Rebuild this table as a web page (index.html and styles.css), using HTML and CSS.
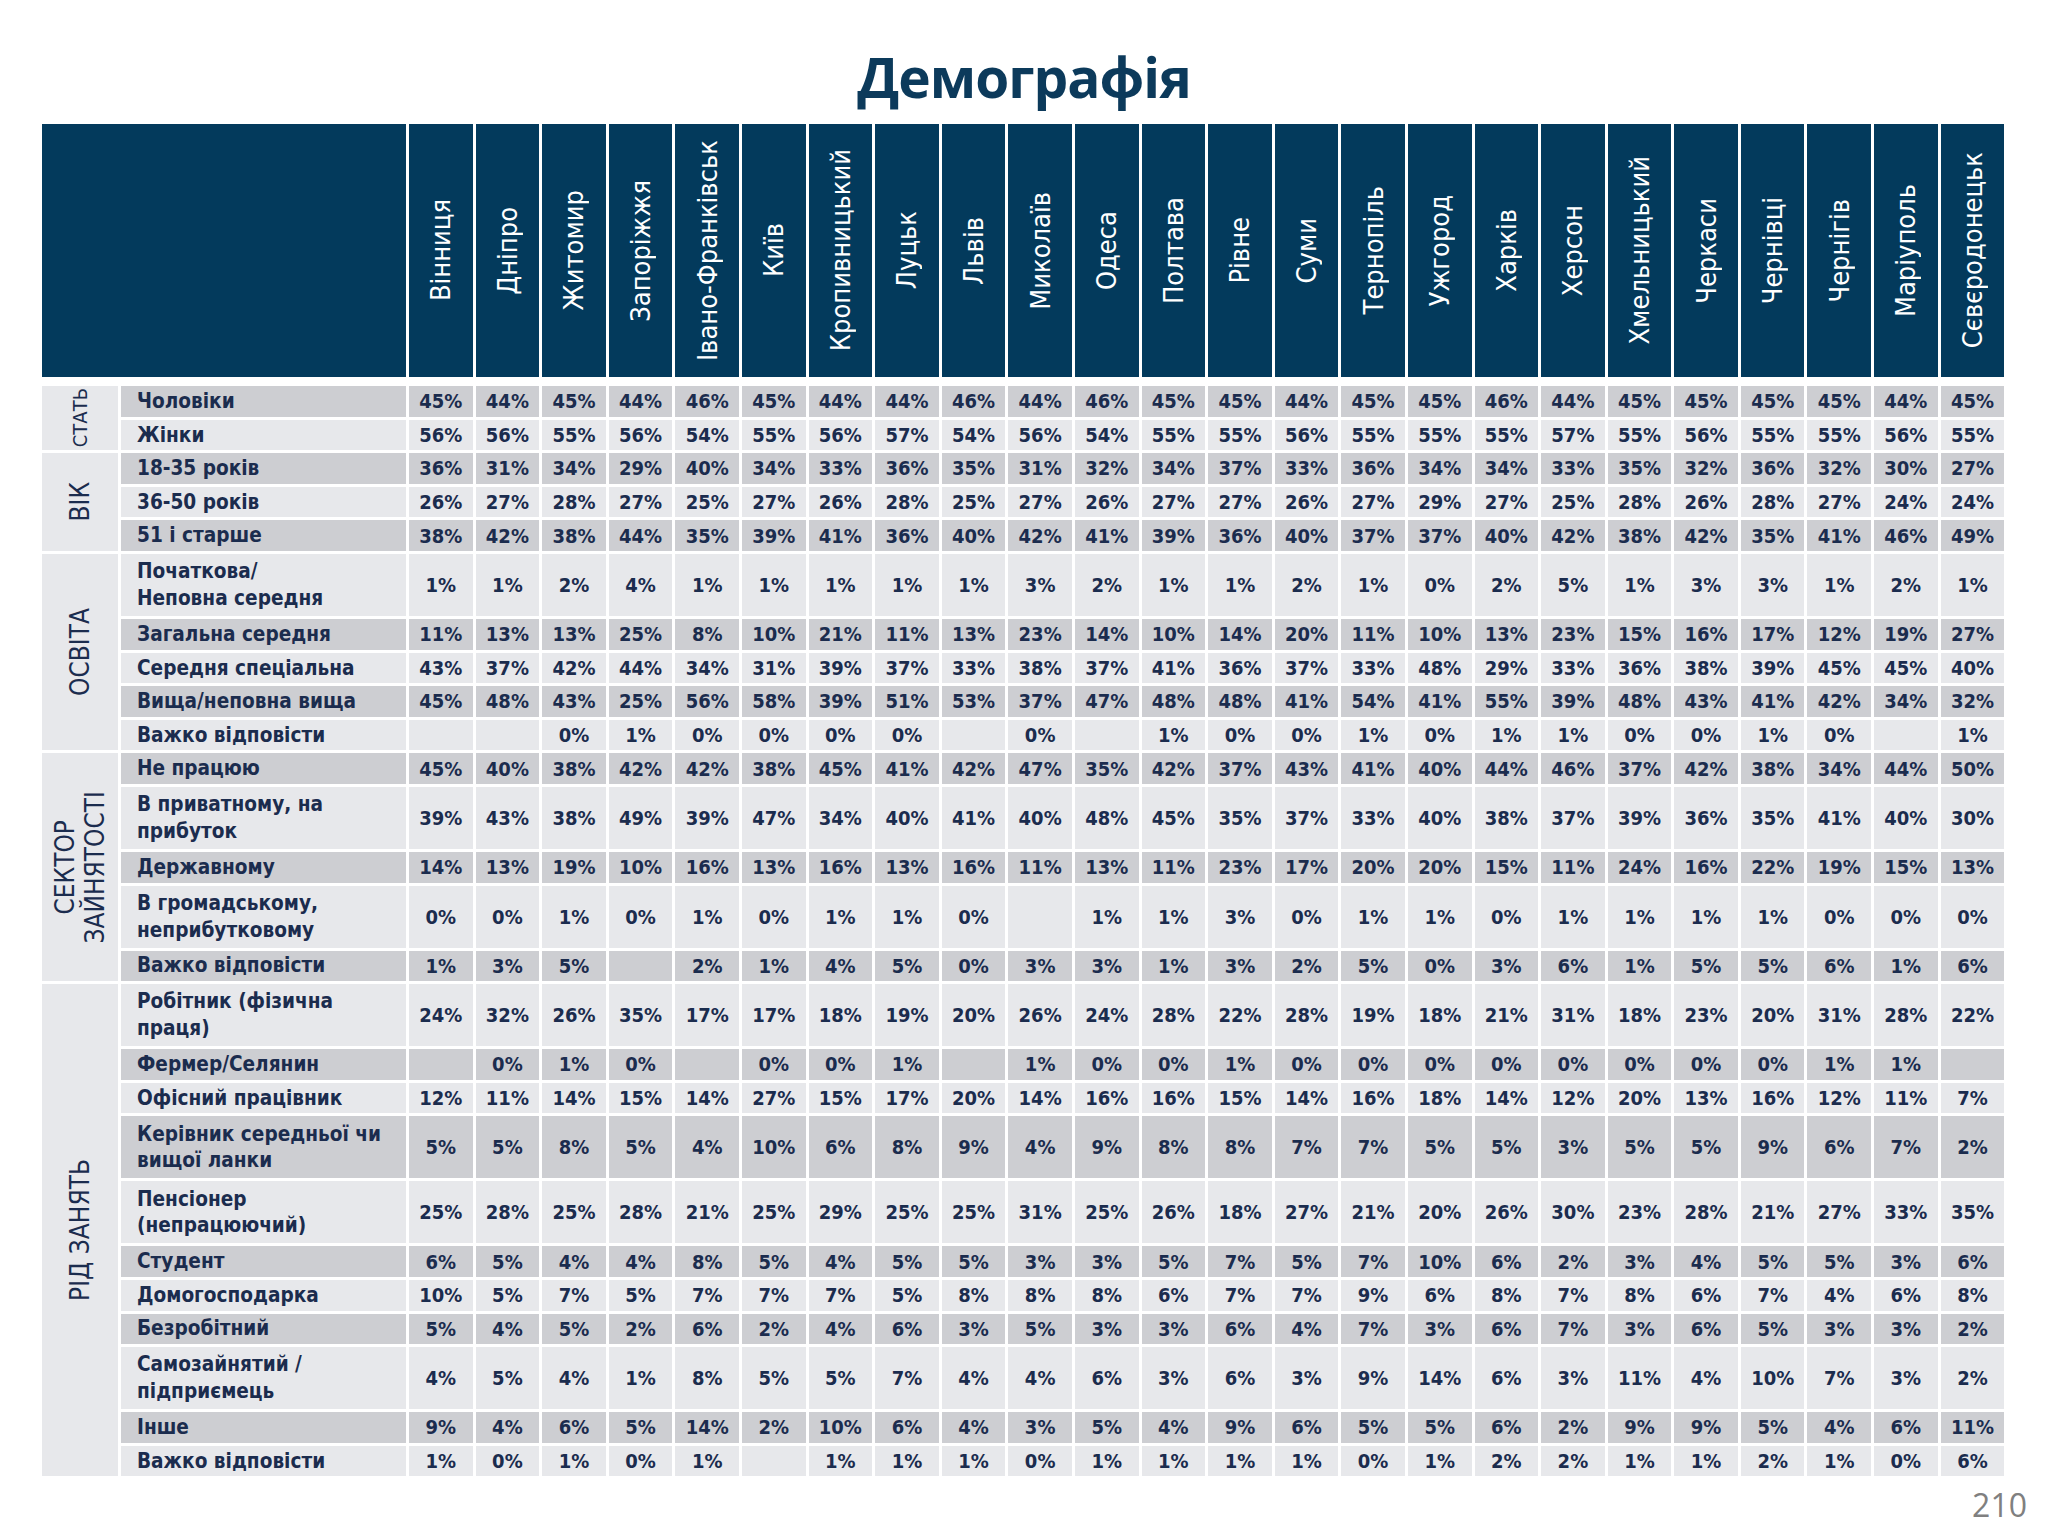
FILE: index.html
```html
<!DOCTYPE html>
<html lang="uk">
<head>
<meta charset="utf-8">
<title>Демографія</title>
<link rel="stylesheet" href="styles.css">
</head>
<body>
<div class="page">
  <h1 class="title">Демографія</h1>
  <div class="grid head">
    <div class="blank"></div>
    <div class="city"><span>Вінниця</span></div>
    <div class="city"><span>Дніпро</span></div>
    <div class="city"><span>Житомир</span></div>
    <div class="city"><span>Запоріжжя</span></div>
    <div class="city"><span>Івано-Франківськ</span></div>
    <div class="city"><span>Київ</span></div>
    <div class="city"><span>Кропивницький</span></div>
    <div class="city"><span>Луцьк</span></div>
    <div class="city"><span>Львів</span></div>
    <div class="city"><span>Миколаїв</span></div>
    <div class="city"><span>Одеса</span></div>
    <div class="city"><span>Полтава</span></div>
    <div class="city"><span>Рівне</span></div>
    <div class="city"><span>Суми</span></div>
    <div class="city"><span>Тернопіль</span></div>
    <div class="city"><span>Ужгород</span></div>
    <div class="city"><span>Харків</span></div>
    <div class="city"><span>Херсон</span></div>
    <div class="city"><span>Хмельницький</span></div>
    <div class="city"><span>Черкаси</span></div>
    <div class="city"><span>Чернівці</span></div>
    <div class="city"><span>Чернігів</span></div>
    <div class="city"><span>Маріуполь</span></div>
    <div class="city"><span>Сєвєродонецьк</span></div>
  </div>
  <div class="grid body">
    <div class="cat span2"><span class="small">СТАТЬ</span></div>
    <div class="r d"><div class="lab">Чоловіки</div><div>45%</div><div>44%</div><div>45%</div><div>44%</div><div>46%</div><div>45%</div><div>44%</div><div>44%</div><div>46%</div><div>44%</div><div>46%</div><div>45%</div><div>45%</div><div>44%</div><div>45%</div><div>45%</div><div>46%</div><div>44%</div><div>45%</div><div>45%</div><div>45%</div><div>45%</div><div>44%</div><div>45%</div></div>
    <div class="r"><div class="lab">Жінки</div><div>56%</div><div>56%</div><div>55%</div><div>56%</div><div>54%</div><div>55%</div><div>56%</div><div>57%</div><div>54%</div><div>56%</div><div>54%</div><div>55%</div><div>55%</div><div>56%</div><div>55%</div><div>55%</div><div>55%</div><div>57%</div><div>55%</div><div>56%</div><div>55%</div><div>55%</div><div>56%</div><div>55%</div></div>

    <div class="cat span3"><span>ВІК</span></div>
    <div class="r d"><div class="lab">18-35 років</div><div>36%</div><div>31%</div><div>34%</div><div>29%</div><div>40%</div><div>34%</div><div>33%</div><div>36%</div><div>35%</div><div>31%</div><div>32%</div><div>34%</div><div>37%</div><div>33%</div><div>36%</div><div>34%</div><div>34%</div><div>33%</div><div>35%</div><div>32%</div><div>36%</div><div>32%</div><div>30%</div><div>27%</div></div>
    <div class="r"><div class="lab">36-50 років</div><div>26%</div><div>27%</div><div>28%</div><div>27%</div><div>25%</div><div>27%</div><div>26%</div><div>28%</div><div>25%</div><div>27%</div><div>26%</div><div>27%</div><div>27%</div><div>26%</div><div>27%</div><div>29%</div><div>27%</div><div>25%</div><div>28%</div><div>26%</div><div>28%</div><div>27%</div><div>24%</div><div>24%</div></div>
    <div class="r d"><div class="lab">51 і старше</div><div>38%</div><div>42%</div><div>38%</div><div>44%</div><div>35%</div><div>39%</div><div>41%</div><div>36%</div><div>40%</div><div>42%</div><div>41%</div><div>39%</div><div>36%</div><div>40%</div><div>37%</div><div>37%</div><div>40%</div><div>42%</div><div>38%</div><div>42%</div><div>35%</div><div>41%</div><div>46%</div><div>49%</div></div>

    <div class="cat span5"><span>ОСВІТА</span></div>
    <div class="r"><div class="lab">Початкова/<br>Неповна середня</div><div>1%</div><div>1%</div><div>2%</div><div>4%</div><div>1%</div><div>1%</div><div>1%</div><div>1%</div><div>1%</div><div>3%</div><div>2%</div><div>1%</div><div>1%</div><div>2%</div><div>1%</div><div>0%</div><div>2%</div><div>5%</div><div>1%</div><div>3%</div><div>3%</div><div>1%</div><div>2%</div><div>1%</div></div>
    <div class="r d"><div class="lab">Загальна середня</div><div>11%</div><div>13%</div><div>13%</div><div>25%</div><div>8%</div><div>10%</div><div>21%</div><div>11%</div><div>13%</div><div>23%</div><div>14%</div><div>10%</div><div>14%</div><div>20%</div><div>11%</div><div>10%</div><div>13%</div><div>23%</div><div>15%</div><div>16%</div><div>17%</div><div>12%</div><div>19%</div><div>27%</div></div>
    <div class="r"><div class="lab">Середня спеціальна</div><div>43%</div><div>37%</div><div>42%</div><div>44%</div><div>34%</div><div>31%</div><div>39%</div><div>37%</div><div>33%</div><div>38%</div><div>37%</div><div>41%</div><div>36%</div><div>37%</div><div>33%</div><div>48%</div><div>29%</div><div>33%</div><div>36%</div><div>38%</div><div>39%</div><div>45%</div><div>45%</div><div>40%</div></div>
    <div class="r d"><div class="lab">Вища/неповна вища</div><div>45%</div><div>48%</div><div>43%</div><div>25%</div><div>56%</div><div>58%</div><div>39%</div><div>51%</div><div>53%</div><div>37%</div><div>47%</div><div>48%</div><div>48%</div><div>41%</div><div>54%</div><div>41%</div><div>55%</div><div>39%</div><div>48%</div><div>43%</div><div>41%</div><div>42%</div><div>34%</div><div>32%</div></div>
    <div class="r"><div class="lab">Важко відповісти</div><div></div><div></div><div>0%</div><div>1%</div><div>0%</div><div>0%</div><div>0%</div><div>0%</div><div></div><div>0%</div><div></div><div>1%</div><div>0%</div><div>0%</div><div>1%</div><div>0%</div><div>1%</div><div>1%</div><div>0%</div><div>0%</div><div>1%</div><div>0%</div><div></div><div>1%</div></div>

    <div class="cat span5"><span>СЕКТОР<br>ЗАЙНЯТОСТІ</span></div>
    <div class="r d"><div class="lab">Не працюю</div><div>45%</div><div>40%</div><div>38%</div><div>42%</div><div>42%</div><div>38%</div><div>45%</div><div>41%</div><div>42%</div><div>47%</div><div>35%</div><div>42%</div><div>37%</div><div>43%</div><div>41%</div><div>40%</div><div>44%</div><div>46%</div><div>37%</div><div>42%</div><div>38%</div><div>34%</div><div>44%</div><div>50%</div></div>
    <div class="r"><div class="lab">В приватному, на<br>прибуток</div><div>39%</div><div>43%</div><div>38%</div><div>49%</div><div>39%</div><div>47%</div><div>34%</div><div>40%</div><div>41%</div><div>40%</div><div>48%</div><div>45%</div><div>35%</div><div>37%</div><div>33%</div><div>40%</div><div>38%</div><div>37%</div><div>39%</div><div>36%</div><div>35%</div><div>41%</div><div>40%</div><div>30%</div></div>
    <div class="r d"><div class="lab">Державному</div><div>14%</div><div>13%</div><div>19%</div><div>10%</div><div>16%</div><div>13%</div><div>16%</div><div>13%</div><div>16%</div><div>11%</div><div>13%</div><div>11%</div><div>23%</div><div>17%</div><div>20%</div><div>20%</div><div>15%</div><div>11%</div><div>24%</div><div>16%</div><div>22%</div><div>19%</div><div>15%</div><div>13%</div></div>
    <div class="r"><div class="lab">В громадському,<br>неприбутковому</div><div>0%</div><div>0%</div><div>1%</div><div>0%</div><div>1%</div><div>0%</div><div>1%</div><div>1%</div><div>0%</div><div></div><div>1%</div><div>1%</div><div>3%</div><div>0%</div><div>1%</div><div>1%</div><div>0%</div><div>1%</div><div>1%</div><div>1%</div><div>1%</div><div>0%</div><div>0%</div><div>0%</div></div>
    <div class="r d"><div class="lab">Важко відповісти</div><div>1%</div><div>3%</div><div>5%</div><div></div><div>2%</div><div>1%</div><div>4%</div><div>5%</div><div>0%</div><div>3%</div><div>3%</div><div>1%</div><div>3%</div><div>2%</div><div>5%</div><div>0%</div><div>3%</div><div>6%</div><div>1%</div><div>5%</div><div>5%</div><div>6%</div><div>1%</div><div>6%</div></div>

    <div class="cat span11"><span>РІД ЗАНЯТЬ</span></div>
    <div class="r"><div class="lab">Робітник (фізична<br>праця)</div><div>24%</div><div>32%</div><div>26%</div><div>35%</div><div>17%</div><div>17%</div><div>18%</div><div>19%</div><div>20%</div><div>26%</div><div>24%</div><div>28%</div><div>22%</div><div>28%</div><div>19%</div><div>18%</div><div>21%</div><div>31%</div><div>18%</div><div>23%</div><div>20%</div><div>31%</div><div>28%</div><div>22%</div></div>
    <div class="r d"><div class="lab">Фермер/Селянин</div><div></div><div>0%</div><div>1%</div><div>0%</div><div></div><div>0%</div><div>0%</div><div>1%</div><div></div><div>1%</div><div>0%</div><div>0%</div><div>1%</div><div>0%</div><div>0%</div><div>0%</div><div>0%</div><div>0%</div><div>0%</div><div>0%</div><div>0%</div><div>1%</div><div>1%</div><div></div></div>
    <div class="r"><div class="lab">Офісний працівник</div><div>12%</div><div>11%</div><div>14%</div><div>15%</div><div>14%</div><div>27%</div><div>15%</div><div>17%</div><div>20%</div><div>14%</div><div>16%</div><div>16%</div><div>15%</div><div>14%</div><div>16%</div><div>18%</div><div>14%</div><div>12%</div><div>20%</div><div>13%</div><div>16%</div><div>12%</div><div>11%</div><div>7%</div></div>
    <div class="r d"><div class="lab">Керівник середньої чи<br>вищої ланки</div><div>5%</div><div>5%</div><div>8%</div><div>5%</div><div>4%</div><div>10%</div><div>6%</div><div>8%</div><div>9%</div><div>4%</div><div>9%</div><div>8%</div><div>8%</div><div>7%</div><div>7%</div><div>5%</div><div>5%</div><div>3%</div><div>5%</div><div>5%</div><div>9%</div><div>6%</div><div>7%</div><div>2%</div></div>
    <div class="r"><div class="lab">Пенсіонер<br>(непрацюючий)</div><div>25%</div><div>28%</div><div>25%</div><div>28%</div><div>21%</div><div>25%</div><div>29%</div><div>25%</div><div>25%</div><div>31%</div><div>25%</div><div>26%</div><div>18%</div><div>27%</div><div>21%</div><div>20%</div><div>26%</div><div>30%</div><div>23%</div><div>28%</div><div>21%</div><div>27%</div><div>33%</div><div>35%</div></div>
    <div class="r d"><div class="lab">Студент</div><div>6%</div><div>5%</div><div>4%</div><div>4%</div><div>8%</div><div>5%</div><div>4%</div><div>5%</div><div>5%</div><div>3%</div><div>3%</div><div>5%</div><div>7%</div><div>5%</div><div>7%</div><div>10%</div><div>6%</div><div>2%</div><div>3%</div><div>4%</div><div>5%</div><div>5%</div><div>3%</div><div>6%</div></div>
    <div class="r"><div class="lab">Домогосподарка</div><div>10%</div><div>5%</div><div>7%</div><div>5%</div><div>7%</div><div>7%</div><div>7%</div><div>5%</div><div>8%</div><div>8%</div><div>8%</div><div>6%</div><div>7%</div><div>7%</div><div>9%</div><div>6%</div><div>8%</div><div>7%</div><div>8%</div><div>6%</div><div>7%</div><div>4%</div><div>6%</div><div>8%</div></div>
    <div class="r d"><div class="lab">Безробітний</div><div>5%</div><div>4%</div><div>5%</div><div>2%</div><div>6%</div><div>2%</div><div>4%</div><div>6%</div><div>3%</div><div>5%</div><div>3%</div><div>3%</div><div>6%</div><div>4%</div><div>7%</div><div>3%</div><div>6%</div><div>7%</div><div>3%</div><div>6%</div><div>5%</div><div>3%</div><div>3%</div><div>2%</div></div>
    <div class="r"><div class="lab">Самозайнятий /<br>підприємець</div><div>4%</div><div>5%</div><div>4%</div><div>1%</div><div>8%</div><div>5%</div><div>5%</div><div>7%</div><div>4%</div><div>4%</div><div>6%</div><div>3%</div><div>6%</div><div>3%</div><div>9%</div><div>14%</div><div>6%</div><div>3%</div><div>11%</div><div>4%</div><div>10%</div><div>7%</div><div>3%</div><div>2%</div></div>
    <div class="r d"><div class="lab">Інше</div><div>9%</div><div>4%</div><div>6%</div><div>5%</div><div>14%</div><div>2%</div><div>10%</div><div>6%</div><div>4%</div><div>3%</div><div>5%</div><div>4%</div><div>9%</div><div>6%</div><div>5%</div><div>5%</div><div>6%</div><div>2%</div><div>9%</div><div>9%</div><div>5%</div><div>4%</div><div>6%</div><div>11%</div></div>
    <div class="r"><div class="lab">Важко відповісти</div><div>1%</div><div>0%</div><div>1%</div><div>0%</div><div>1%</div><div></div><div>1%</div><div>1%</div><div>1%</div><div>0%</div><div>1%</div><div>1%</div><div>1%</div><div>1%</div><div>0%</div><div>1%</div><div>2%</div><div>2%</div><div>1%</div><div>1%</div><div>2%</div><div>1%</div><div>0%</div><div>6%</div></div>
  </div>
  <div class="footer"><span class="pagenum">210</span></div>
</div>
</body>
</html>
```

FILE: styles.css
```css
html, body {
  margin: 0;
  padding: 0;
  background: #ffffff;
}

body {
  font-family: "DejaVu Sans Condensed", "DejaVu Sans", sans-serif;
  font-stretch: condensed;
  color: #1b2c4e;
}

.page {
  width: 2048px;
  height: 1536px;
  overflow: hidden;
}

.title {
  margin: 0 0 12px 0;
  padding-top: 42px;
  height: 70px;
  line-height: 70px;
  text-align: center;
  font-family: "Open Sans", "Noto Sans", sans-serif;
  font-stretch: normal;
  font-weight: 700;
  font-size: 55px;
  letter-spacing: -1px;
  color: #0c3a5b;
}

.grid {
  display: grid;
  grid-template-columns: 76px 285px repeat(24, 63.6px);
  column-gap: 3px;
  margin-left: 42px;
}

.head {
  height: 253px;
}

.blank {
  grid-column: span 2;
  background: #033a5c;
}

.city {
  background: #033a5c;
  color: #ffffff;
  display: flex;
  align-items: center;
  justify-content: center;
}

.city span {
  writing-mode: vertical-rl;
  transform: rotate(180deg);
  font-size: 27px;
  white-space: nowrap;
}

.body {
  margin-top: 9px;
  row-gap: 3px;
  grid-template-rows:
    repeat(5, 30.6px) 62px repeat(5, 30.6px) 62px 30.6px 62px 30.6px
    62px 30.6px 30.6px 62px 62px repeat(3, 30.6px) 62px 30.6px 30.6px;
}

.cat {
  grid-column: 1;
  background: #e7e8eb;
  display: flex;
  align-items: center;
  justify-content: center;
  overflow: hidden;
}

.span2 { grid-row: span 2; }
.span3 { grid-row: span 3; }
.span5 { grid-row: span 5; }
.span11 { grid-row: span 11; }

.cat span {
  writing-mode: vertical-rl;
  transform: rotate(180deg);
  font-size: 26px;
  line-height: 30px;
  text-align: center;
  white-space: nowrap;
}

.cat span.small {
  font-size: 20px;
}

.r {
  display: contents;
}

.r > div {
  background: #e7e8eb;
  display: flex;
  align-items: center;
  justify-content: center;
  font-weight: 700;
  font-size: 20px;
  color: #1b2c4e;
}

.r.d > div {
  background: #cdced2;
}

.r > .lab {
  grid-column: 2;
  justify-content: flex-start;
  padding-left: 16px;
  font-size: 20.6px;
  line-height: 26.7px;
  white-space: nowrap;
}

.footer {
  display: flex;
  justify-content: flex-end;
  padding-right: 21px;
  margin-top: 9px;
}

.pagenum {
  font-family: "Open Sans", "Noto Sans", sans-serif;
  font-stretch: normal;
  font-size: 32px;
  line-height: 40px;
  color: #808080;
}
```
